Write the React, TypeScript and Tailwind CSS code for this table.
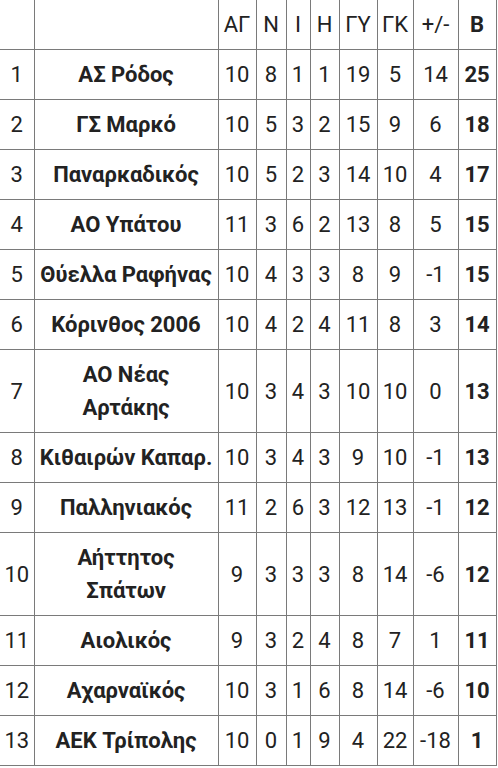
type Row = {
  pos: number;
  name: string[];
  stats: (number | string)[];
  pts: number;
};

const rows: Row[] = [
  { pos: 1, name: ["ΑΣ Ρόδος"], stats: [10, 8, 1, 1, 19, 5, 14], pts: 25 },
  { pos: 2, name: ["ΓΣ Μαρκό"], stats: [10, 5, 3, 2, 15, 9, 6], pts: 18 },
  { pos: 3, name: ["Παναρκαδικός"], stats: [10, 5, 2, 3, 14, 10, 4], pts: 17 },
  { pos: 4, name: ["ΑΟ Υπάτου"], stats: [11, 3, 6, 2, 13, 8, 5], pts: 15 },
  { pos: 5, name: ["Θύελλα Ραφήνας"], stats: [10, 4, 3, 3, 8, 9, -1], pts: 15 },
  { pos: 6, name: ["Κόρινθος 2006"], stats: [10, 4, 2, 4, 11, 8, 3], pts: 14 },
  { pos: 7, name: ["ΑΟ Νέας", "Αρτάκης"], stats: [10, 3, 4, 3, 10, 10, 0], pts: 13 },
  { pos: 8, name: ["Κιθαιρών Καπαρ."], stats: [10, 3, 4, 3, 9, 10, -1], pts: 13 },
  { pos: 9, name: ["Παλληνιακός"], stats: [11, 2, 6, 3, 12, 13, -1], pts: 12 },
  { pos: 10, name: ["Αήττητος", "Σπάτων"], stats: [9, 3, 3, 3, 8, 14, -6], pts: 12 },
  { pos: 11, name: ["Αιολικός"], stats: [9, 3, 2, 4, 8, 7, 1], pts: 11 },
  { pos: 12, name: ["Αχαρναϊκός"], stats: [10, 3, 1, 6, 8, 14, -6], pts: 10 },
  { pos: 13, name: ["ΑΕΚ Τρίπολης"], stats: [10, 0, 1, 9, 4, 22, -18], pts: 1 },
];

const headers = ["ΑΓ", "Ν", "Ι", "Η", "ΓΥ", "ΓΚ", "+/-"];
const widths = ["w-[34px]", "w-[184px]", "w-[38px]", "w-[30px]", "w-[24px]", "w-[29px]", "w-[38px]", "w-[36px]", "w-[45px]", "w-[38px]"];

const cell = "border border-[#7a7a7a] px-0 py-2 text-center align-middle";

export default function App() {
  return (
    <div
      className="w-[498px] h-[768px] bg-white overflow-hidden text-[#222] text-[22px] leading-[33px]"
      style={{ fontFamily: "Roboto, 'Noto Sans', sans-serif" }}
    >
      <table className="w-[496px] table-fixed border-collapse">
        <colgroup>
          {widths.map((w, i) => (
            <col key={i} className={w} />
          ))}
        </colgroup>
        <thead>
          <tr>
            <th className={`${cell} border-l-0 border-t-0 font-normal`}>&nbsp;</th>
            <th className={`${cell} border-t-0 font-normal`}></th>
            {headers.map((h) => (
              <th key={h} className={`${cell} border-t-0 font-normal`}>
                {h}
              </th>
            ))}
            <th className={`${cell} border-t-0 font-bold`}>B</th>
          </tr>
        </thead>
        <tbody>
          {rows.map((r) => (
            <tr key={r.pos}>
              <td className={`${cell} border-l-0`}>{r.pos}</td>
              <td className={`${cell} font-bold`}>
                {r.name.map((n, i) => (
                  <div key={i}>{n}</div>
                ))}
              </td>
              {r.stats.map((s, i) => (
                <td key={i} className={cell}>
                  {s}
                </td>
              ))}
              <td className={`${cell} font-bold`}>{r.pts}</td>
            </tr>
          ))}
        </tbody>
      </table>
    </div>
  );
}
